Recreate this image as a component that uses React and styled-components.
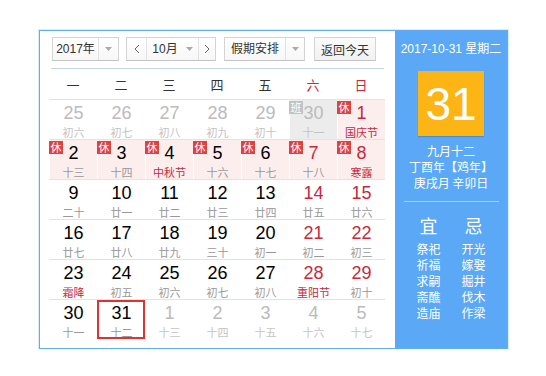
import React from "react";
import styled, { createGlobalStyle } from "styled-components";

const GlobalStyle = createGlobalStyle`
  html, body { margin: 0; padding: 0; background: #fff; }
  body { font-family: "Liberation Sans", Arial, "Noto Sans CJK SC", sans-serif; }
  * { box-sizing: border-box; }
`;

const Page = styled.div`
  padding: 30px 0 0 39px;
`;

const Widget = styled.div`
  display: flex;
  width: 469px;
  height: 319px;
  border: 1px solid #62acf2;
  box-shadow: 0 0 0 1px #d9ecfc;
`;

const Left = styled.div`
  width: 355px;
  padding: 0 10px 9px 9px;
  background: #fff;
  display: flex;
  flex-direction: column;
`;

const Toolbar = styled.div`
  height: 38px;
  margin: 0 1px 0 2px;
  padding: 6px 0 0 1px;
  border-bottom: 1px solid #c6d6e6;
  display: flex;
  align-items: flex-start;
`;

const Control = styled.div`
  display: flex;
  height: 24px;
  border: 1px solid #d4d4d4;
  border-bottom-color: #c4c4c4;
  background: linear-gradient(#ffffff, #f7f7f7);
  margin-right: ${(p) => p.$gap || 0}px;
  font-size: 12px;
  color: #333;
  font-family: "Liberation Sans", Arial, "Noto Sans CJK SC", sans-serif;
`;

const Seg = styled.div`
  width: ${(p) => p.$w}px;
  display: flex;
  align-items: center;
  justify-content: center;
  border-left: ${(p) => (p.$divider ? "1px solid #e2e2e2" : "none")};
  gap: 8px;
  line-height: 22px;
`;

const Button = styled.div`
  width: 62px;
  height: 24px;
  border: 1px solid #d4d4d4;
  border-bottom-color: #c4c4c4;
  background: linear-gradient(#fbfbfb, #f1f1f1);
  display: flex;
  align-items: center;
  justify-content: center;
  font-size: 12px;
  color: #333;
`;

const Caret = () => (
  <svg width="7" height="4" viewBox="0 0 7 4">
    <path d="M0 0h7L3.5 4z" fill="#aaa" />
  </svg>
);

const Chevron = ({ dir }) => (
  <svg width="6" height="10" viewBox="0 0 6 10">
    <path
      d={dir === "left" ? "M5 1L1 5l4 4" : "M1 1l4 4-4 4"}
      fill="none"
      stroke="#666"
      strokeWidth="1"
    />
  </svg>
);

const WeekHead = styled.div`
  display: grid;
  grid-template-columns: repeat(7, 48px);
  height: 30px;
  align-items: center;
  font-size: 13px;
  font-family: "Noto Sans CJK SC", sans-serif;
`;

const WeekDay = styled.div`
  text-align: center;
  color: ${(p) => (p.$red ? "#c8283c" : "#333")};
`;

const Row = styled.div`
  display: grid;
  grid-template-columns: repeat(7, 48px);
  height: 40px;
  border-top: 1px solid #e3e3e3;
`;

const Cell = styled.div`
  position: relative;
  display: flex;
  flex-direction: column;
  align-items: center;
  background: ${(p) =>
    p.$bg === "rest" ? "#fdeeee" : p.$bg === "work" ? "#ececec" : "transparent"};
  border-left: 1px solid ${(p) => (p.$bg ? "#fff" : "transparent")};
  outline: ${(p) => (p.$today ? "2px solid #e0322f" : "none")};
  outline-offset: -2px;
`;

const Num = styled.div`
  font-size: 18px;
  line-height: 20px;
  margin-top: 3px;
  font-family: "Liberation Sans", Arial, sans-serif;
  color: ${(p) => (p.$other ? "#bbb" : p.$red ? "#c8283c" : "#000")};
`;

const Lunar = styled.div`
  font-size: 11px;
  line-height: 14px;
  margin-top: 2px;
  font-family: "Noto Sans CJK SC", sans-serif;
  color: ${(p) => (p.$red ? "#c8283c" : p.$other ? "#c4c4c4" : "#999")};
`;

const Badge = styled.span`
  position: absolute;
  left: -1px;
  top: 1px;
  width: 14px;
  height: 13px;
  background: ${(p) => (p.$work ? "#c2c2c2" : "#e0403e")};
  color: #fff;
  font-size: 11px;
  line-height: 13px;
  text-align: center;
  font-family: "Noto Sans CJK SC", sans-serif;
`;

const Right = styled.div`
  width: 112px;
  background: #5aa8f6;
  color: #fff;
  display: flex;
  flex-direction: column;
  align-items: center;
  padding-top: 10px;
`;

const DateLine = styled.div`
  font-size: 12px;
  line-height: 16px;
  font-family: "Liberation Sans", Arial, "Noto Sans CJK SC", sans-serif;
`;

const BigDay = styled.div`
  margin-top: 14px;
  width: 66px;
  height: 65px;
  background: #fdb415;
  display: flex;
  align-items: center;
  justify-content: center;
  font-size: 46px;
  font-family: "Liberation Sans", Arial, sans-serif;
  box-shadow: 0 1px 1px rgba(0, 0, 0, 0.15);
`;

const InfoLines = styled.div`
  margin-top: 7px;
  text-align: center;
  font-size: 12px;
  line-height: 16px;
  font-family: "Noto Sans CJK SC", sans-serif;
`;

const Divider = styled.div`
  width: 95px;
  height: 1px;
  background: #a9d1fa;
  margin-top: 10px;
`;

const YiJi = styled.div`
  margin-top: 10px;
  display: grid;
  grid-template-columns: 45px 45px;
  text-align: center;
  font-family: "Noto Sans CJK SC", sans-serif;
`;

const YiJiHead = styled.div`
  font-size: 18px;
  line-height: 26px;
  margin-bottom: 3px;
`;

const YiJiItem = styled.div`
  font-size: 12px;
  line-height: 16px;
`;

const weeks = [
  [
    { n: 25, l: "初六", o: 1 },
    { n: 26, l: "初七", o: 1 },
    { n: 27, l: "初八", o: 1 },
    { n: 28, l: "初九", o: 1 },
    { n: 29, l: "初十", o: 1 },
    { n: 30, l: "十一", o: 1, bg: "work", badge: "班" },
    { n: 1, l: "国庆节", lr: 1, r: 1, bg: "rest", badge: "休" },
  ],
  [
    { n: 2, l: "十三", bg: "rest", badge: "休" },
    { n: 3, l: "十四", bg: "rest", badge: "休" },
    { n: 4, l: "中秋节", lr: 1, bg: "rest", badge: "休" },
    { n: 5, l: "十六", bg: "rest", badge: "休" },
    { n: 6, l: "十七", bg: "rest", badge: "休" },
    { n: 7, l: "十八", r: 1, bg: "rest", badge: "休" },
    { n: 8, l: "寒露", r: 1, lr: 1, bg: "rest", badge: "休" },
  ],
  [
    { n: 9, l: "二十" },
    { n: 10, l: "廿一" },
    { n: 11, l: "廿二" },
    { n: 12, l: "廿三" },
    { n: 13, l: "廿四" },
    { n: 14, l: "廿五", r: 1 },
    { n: 15, l: "廿六", r: 1 },
  ],
  [
    { n: 16, l: "廿七" },
    { n: 17, l: "廿八" },
    { n: 18, l: "廿九" },
    { n: 19, l: "三十" },
    { n: 20, l: "初一" },
    { n: 21, l: "初二", r: 1 },
    { n: 22, l: "初三", r: 1 },
  ],
  [
    { n: 23, l: "霜降", lr: 1 },
    { n: 24, l: "初五" },
    { n: 25, l: "初六" },
    { n: 26, l: "初七" },
    { n: 27, l: "初八" },
    { n: 28, l: "重阳节", r: 1, lr: 1 },
    { n: 29, l: "初十", r: 1 },
  ],
  [
    { n: 30, l: "十一" },
    { n: 31, l: "十二", today: 1 },
    { n: 1, l: "十三", o: 1 },
    { n: 2, l: "十四", o: 1 },
    { n: 3, l: "十五", o: 1 },
    { n: 4, l: "十六", o: 1 },
    { n: 5, l: "十七", o: 1 },
  ],
];

const weekdays = ["一", "二", "三", "四", "五", "六", "日"];
const yi = ["祭祀", "祈福", "求嗣", "斋醮", "造庙"];
const ji = ["开光", "嫁娶", "掘井", "伐木", "作梁"];

export default function App() {
  return (
    <>
      <GlobalStyle />
      <Page>
        <Widget>
          <Left>
            <Toolbar>
              <Control $gap={7}>
                <Seg $w={45}>2017年</Seg>
                <Seg $w={20} $divider>
                  <Caret />
                </Seg>
              </Control>
              <Control $gap={8}>
                <Seg $w={19}>
                  <Chevron dir="left" />
                </Seg>
                <Seg $w={52} $divider>
                  <span>10月</span>
                  <Caret />
                </Seg>
                <Seg $w={17} $divider>
                  <Chevron dir="right" />
                </Seg>
              </Control>
              <Control $gap={9}>
                <Seg $w={60}>假期安排</Seg>
                <Seg $w={19} $divider>
                  <Caret />
                </Seg>
              </Control>
              <Button>返回今天</Button>
            </Toolbar>
            <WeekHead>
              {weekdays.map((w, i) => (
                <WeekDay key={w} $red={i >= 5}>
                  {w}
                </WeekDay>
              ))}
            </WeekHead>
            {weeks.map((wk, wi) => (
              <Row key={wi}>
                {wk.map((d, di) => (
                  <Cell key={di} $bg={d.bg} $today={d.today}>
                    {d.badge && <Badge $work={d.badge === "班"}>{d.badge}</Badge>}
                    <Num $other={d.o} $red={d.r}>
                      {d.n}
                    </Num>
                    <Lunar $other={d.o} $red={d.lr}>
                      {d.l}
                    </Lunar>
                  </Cell>
                ))}
              </Row>
            ))}
          </Left>
          <Right>
            <DateLine>2017-10-31 星期二</DateLine>
            <BigDay>31</BigDay>
            <InfoLines>
              <div>九月十二</div>
              <div>丁酉年【鸡年】</div>
              <div>庚戌月 辛卯日</div>
            </InfoLines>
            <Divider />
            <YiJi>
              <YiJiHead>宜</YiJiHead>
              <YiJiHead>忌</YiJiHead>
              {yi.map((y, i) => (
                <React.Fragment key={y}>
                  <YiJiItem>{y}</YiJiItem>
                  <YiJiItem>{ji[i]}</YiJiItem>
                </React.Fragment>
              ))}
            </YiJi>
          </Right>
        </Widget>
      </Page>
    </>
  );
}
